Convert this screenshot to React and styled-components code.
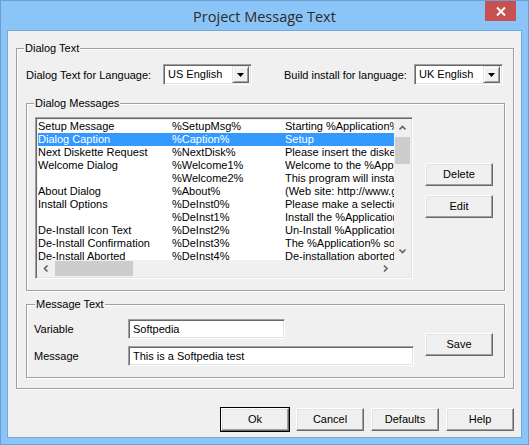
import React from "react";
import styled, { createGlobalStyle } from "styled-components";

const Global = createGlobalStyle`
  html, body { margin: 0; padding: 0; background: #ffffff; }
  body { font-family: "Liberation Sans", Arial, sans-serif; font-size: 11px; color: #000; }
  * { box-sizing: border-box; }
`;

const Window = styled.div`
  width: 529px;
  height: 445px;
  background: #8bc5f7;
  border: 1px solid #6a9fd4;
  display: flex;
  flex-direction: column;
  padding: 0 6px 6px 6px;
`;

const TitleBar = styled.div`
  height: 29px;
  position: relative;
  display: flex;
  align-items: center;
  justify-content: center;
  margin: 0 -6px;
`;

const Title = styled.div`
  font-family: "Open Sans", "Noto Sans", sans-serif;
  font-size: 14.5px;
  color: #2b2b2b;
  padding-top: 2px;
`;

const CloseBtn = styled.div`
  position: absolute;
  top: 0;
  right: 12px;
  width: 31px;
  height: 20px;
  background: #c75050;
  display: flex;
  align-items: center;
  justify-content: center;
`;

const Client = styled.div`
  flex: 1;
  background: #f0f0f0;
  border: 1px solid #74a9dd;
  padding: 17px 7px 6px 8px;
  display: flex;
  flex-direction: column;
`;

const Group = styled.div`
  position: relative;
  border: 1px solid #a0a0a0;
  box-shadow: 1px 1px 0 #ffffff, inset 1px 1px 0 #ffffff;
  padding: ${(p) => p.$pad};
  margin: ${(p) => p.$margin || "0"};
  display: flex;
  flex-direction: column;
`;

const Legend = styled.span`
  position: absolute;
  top: -7px;
  left: ${(p) => p.$left}px;
  background: #f0f0f0;
  padding: 0 1px;
  line-height: 13px;
  white-space: nowrap;
`;

const LangRow = styled.div`
  display: flex;
  align-items: center;
  height: 21px;
  margin-right: 2px;
`;

const Label = styled.span`
  width: ${(p) => p.$w}px;
  flex: none;
  white-space: nowrap;
`;

const Spacer = styled.div`
  flex: 1;
`;

const Combo = styled.div`
  width: 89px;
  height: 21px;
  flex: none;
  background: #fff;
  border-top: 1px solid #a0a0a0;
  border-left: 1px solid #a0a0a0;
  border-right: 1px solid #ffffff;
  border-bottom: 1px solid #ffffff;
  box-shadow: inset 1px 1px 0 #696969, inset -1px -1px 0 #e3e3e3;
  display: flex;
  align-items: center;
  padding: 2px 2px 2px 4px;
`;

const ComboText = styled.span`
  flex: 1;
  font-size: 11px;
  line-height: 13px;
  white-space: nowrap;
`;

const DropBtn = styled.div`
  width: 17px;
  height: 17px;
  background: #f0f0f0;
  border-top: 1px solid #e3e3e3;
  border-left: 1px solid #e3e3e3;
  border-right: 1px solid #696969;
  border-bottom: 1px solid #696969;
  box-shadow: inset 1px 1px 0 #ffffff, inset -1px -1px 0 #a0a0a0;
  display: flex;
  align-items: center;
  justify-content: center;
`;

const MessagesBody = styled.div`
  display: flex;
  align-items: flex-start;
`;

const ListBox = styled.div`
  width: 378px;
  height: 162px;
  flex: none;
  border-top: 1px solid #a0a0a0;
  border-left: 1px solid #a0a0a0;
  border-right: 1px solid #ffffff;
  border-bottom: 1px solid #ffffff;
  box-shadow: inset 1px 1px 0 #696969, inset -1px -1px 0 #e3e3e3;
  padding: 2px 1px 1px 2px;
  display: grid;
  grid-template-columns: 1fr 17px;
  grid-template-rows: 1fr 17px;
`;

const Viewport = styled.div`
  background: #fff;
  overflow: hidden;
`;

const Row = styled.div`
  height: 13px;
  display: grid;
  grid-template-columns: 134px 113px minmax(0, 1fr);
  line-height: 13px;
  white-space: nowrap;
  background: ${(p) => (p.$sel ? "#3399ff" : "transparent")};
  color: ${(p) => (p.$sel ? "#fff" : "#000")};
`;

const Cell = styled.span`
  white-space: nowrap;
  overflow: hidden;
`;

const VScroll = styled.div`
  background: #f0f0f0;
  display: flex;
  flex-direction: column;
  align-items: center;
`;

const HScroll = styled.div`
  background: #f0f0f0;
  display: flex;
  align-items: center;
`;

const Corner = styled.div`
  background: #f0f0f0;
`;

const ArrowBox = styled.div`
  width: 17px;
  height: 17px;
  flex: none;
  display: flex;
  align-items: center;
  justify-content: center;
`;

const VThumb = styled.div`
  width: 15px;
  height: 27px;
  background: #cdcdcd;
`;

const HThumb = styled.div`
  width: 78px;
  height: 15px;
  background: #cdcdcd;
`;

const SideButtons = styled.div`
  display: flex;
  flex-direction: column;
  gap: 9px;
  margin-left: 12px;
  margin-top: 46px;
`;

const Button = styled.div`
  width: 68px;
  height: 23px;
  background: #f0f0f0;
  border-top: 1px solid #ffffff;
  border-left: 1px solid #ffffff;
  border-right: 1px solid #696969;
  border-bottom: 1px solid #696969;
  box-shadow: inset -1px -1px 0 #a0a0a0, inset 1px 1px 0 #e3e3e3;
  display: flex;
  align-items: center;
  justify-content: center;
  outline: ${(p) => (p.$default ? "1px solid #000" : "none")};
  font-size: 11px;
  line-height: 13px;
`;

const MsgBody = styled.div`
  display: flex;
  align-items: center;
`;

const Fields = styled.div`
  display: flex;
  flex-direction: column;
  gap: 7px;
`;

const FieldRow = styled.div`
  display: flex;
  align-items: center;
  height: 20px;
`;

const TextBox = styled.div`
  width: ${(p) => p.$w}px;
  height: 20px;
  background: #fff;
  border-top: 1px solid #a0a0a0;
  border-left: 1px solid #a0a0a0;
  border-right: 1px solid #ffffff;
  border-bottom: 1px solid #ffffff;
  box-shadow: inset 1px 1px 0 #696969, inset -1px -1px 0 #e3e3e3;
  padding: 0 3px 0 4px;
  display: flex;
  align-items: center;
  font-size: 11px;
  line-height: 13px;
  white-space: nowrap;
`;

const SaveWrap = styled.div`
  margin-left: 11px;
  margin-top: 3px;
`;

const BottomBar = styled.div`
  display: flex;
  justify-content: flex-end;
  gap: 7px;
  margin-top: 19px;
`;

const rows = [
  ["Setup Message", "%SetupMsg%", "Starting %Application% S"],
  ["Dialog Caption", "%Caption%", "Setup", true],
  ["Next Diskette Request", "%NextDisk%", "Please insert the diskett"],
  ["Welcome Dialog", "%Welcome1%", "Welcome to the %Applic"],
  ["", "%Welcome2%", "This program will install t"],
  ["About Dialog", "%About%", "(Web site: http://www.g"],
  ["Install Options", "%DeInst0%", "Please make a selection"],
  ["", "%DeInst1%", "Install the %Application%"],
  ["De-Install Icon Text", "%DeInst2%", "Un-Install %Application%"],
  ["De-Install Confirmation", "%DeInst3%", "The %Application% softw"],
  ["De-Install Aborted", "%DeInst4%", "De-installation aborted -"],
];

const Chevron = ({ dir }) => {
  const paths = {
    up: "M1.5 5.5 L4.5 2.5 L7.5 5.5",
    down: "M1.5 2.5 L4.5 5.5 L7.5 2.5",
    left: "M5.5 1.5 L2.5 4.5 L5.5 7.5",
    right: "M3 1.5 L6 4.5 L3 7.5",
  };
  return (
    <svg width="9" height="9" viewBox="0 0 9 9">
      <path d={paths[dir]} fill="none" stroke="#606060" strokeWidth="1.6" />
    </svg>
  );
};

const DownTri = () => (
  <svg width="7" height="4" viewBox="0 0 7 4">
    <path d="M0 0 H7 L3.5 4 Z" fill="#000" />
  </svg>
);

export default function App() {
  return (
    <>
      <Global />
      <Window>
        <TitleBar>
          <Title>Project Message Text</Title>
          <CloseBtn>
            <svg width="10" height="9" viewBox="0 0 10 9">
              <path d="M1 0.5 L9 8.5 M9 0.5 L1 8.5" stroke="#fff" strokeWidth="2" />
            </svg>
          </CloseBtn>
        </TitleBar>
        <Client>
          <Group $pad="15px 8px 10px 9px">
            <Legend $left={7}>Dialog Text</Legend>
            <LangRow>
              <Label $w={137}>Dialog Text for Language:</Label>
              <Combo>
                <ComboText>US English</ComboText>
                <DropBtn><DownTri /></DropBtn>
              </Combo>
              <Spacer />
              <Label $w={130}>Build install for language:</Label>
              <Combo>
                <ComboText>UK English</ComboText>
                <DropBtn><DownTri /></DropBtn>
              </Combo>
            </LangRow>
            <Group $pad="13px 8px 11px 8px" $margin="18px 0 0 0">
              <Legend $left={7}>Dialog Messages</Legend>
              <MessagesBody>
                <ListBox>
                  <Viewport>
                    {rows.map(([a, b, c, sel], i) => (
                      <Row key={i} $sel={sel}>
                        <Cell>{a}</Cell>
                        <Cell>{b}</Cell>
                        <Cell>{c}</Cell>
                      </Row>
                    ))}
                  </Viewport>
                  <VScroll>
                    <ArrowBox><Chevron dir="up" /></ArrowBox>
                    <VThumb />
                    <Spacer />
                    <ArrowBox><Chevron dir="down" /></ArrowBox>
                  </VScroll>
                  <HScroll>
                    <ArrowBox><Chevron dir="left" /></ArrowBox>
                    <HThumb />
                    <Spacer />
                    <ArrowBox><Chevron dir="right" /></ArrowBox>
                  </HScroll>
                  <Corner />
                </ListBox>
                <SideButtons>
                  <Button>Delete</Button>
                  <Button>Edit</Button>
                </SideButtons>
              </MessagesBody>
            </Group>
            <Group $pad="14px 8px 11px 7px" $margin="13px 0 0 0">
              <Legend $left={8}>Message Text</Legend>
              <MsgBody>
                <Fields>
                  <FieldRow>
                    <Label $w={94}>Variable</Label>
                    <TextBox $w={157}>Softpedia</TextBox>
                  </FieldRow>
                  <FieldRow>
                    <Label $w={94}>Message</Label>
                    <TextBox $w={286}>This is a Softpedia test</TextBox>
                  </FieldRow>
                </Fields>
                <SaveWrap>
                  <Button>Save</Button>
                </SaveWrap>
              </MsgBody>
            </Group>
          </Group>
          <BottomBar>
            <Button $default>Ok</Button>
            <Button>Cancel</Button>
            <Button>Defaults</Button>
            <Button>Help</Button>
          </BottomBar>
        </Client>
      </Window>
    </>
  );
}
